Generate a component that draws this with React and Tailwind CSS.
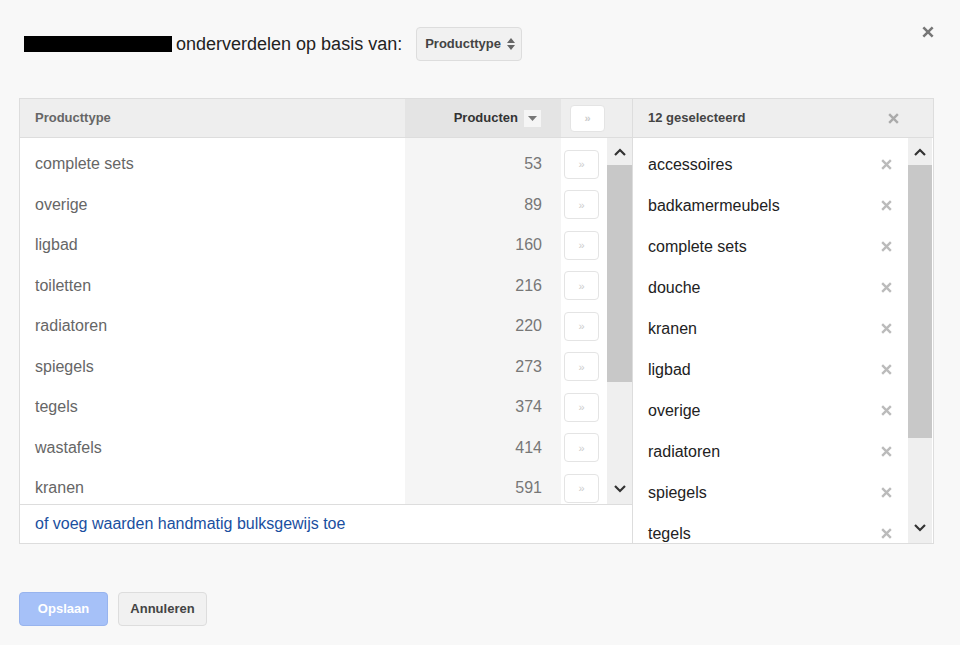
const left = [["complete sets",53],["overige",89],["ligbad",160],["toiletten",216],["radiatoren",220],["spiegels",273],["tegels",374],["wastafels",414],["kranen",591]];
const right = ["accessoires","badkamermeubels","complete sets","douche","kranen","ligbad","overige","radiatoren","spiegels","tegels"];

const Up = () => (<svg width="12" height="8" viewBox="0 0 12 8"><path d="M1 7 L6 2 L11 7" stroke="#333" strokeWidth="2.2" fill="none"/></svg>);
const Down = () => (<svg width="12" height="8" viewBox="0 0 12 8"><path d="M1 1 L6 6 L11 1" stroke="#333" strokeWidth="2.2" fill="none"/></svg>);
const X = ({c="#bbb", s=13}) => (<svg width={s} height={s} viewBox="0 0 12 12"><path d="M2 2 L10 10 M10 2 L2 10" stroke={c} strokeWidth="2.2"/></svg>);
const Btn = ({h="h-[29px]", w="w-[35px]"}) => (<div className={`${w} ${h} bg-white border border-[#e4e4e4] rounded-sm flex items-center justify-center text-[#ccc] text-[11px]`}>»</div>);

export default function App() {
  return (
    <div className="w-[960px] h-[645px] bg-[#f8f8f8] relative overflow-hidden" style={{fontFamily:'"Liberation Sans", Arial, sans-serif'}}>
      <div className="absolute left-[921px] top-[25px]"><X c="#777" s={14}/></div>
      <div className="flex items-center pl-[24px] pt-[27px] h-[61px]">
        <div className="w-[148px] h-[16px] bg-black"/>
        <span className="ml-[4px] text-[18px] text-[#222]">onderverdelen op basis van:</span>
        <div className="ml-[14px] w-[106px] h-[34px] border border-[#ddd] bg-[#f1f1f1] rounded-sm flex items-center pl-[8px] gap-[6px] text-[13px] font-bold text-[#444]">
          Producttype
          <svg width="8" height="14" viewBox="0 0 8 14"><path d="M0 6 L4 1 L8 6Z M0 8 L4 13 L8 8Z" fill="#666"/></svg>
        </div>
      </div>
      <div className="ml-[19px] mt-[37px] w-[915px] h-[446px] border border-[#ddd] flex bg-white">
        <div className="w-[613px] flex flex-col border-r border-[#ddd]">
          <div className="h-[39px] flex bg-[#eeeeee] border-b border-[#ddd] text-[13px] font-bold">
            <div className="w-[385px] flex items-center pl-[15px] text-[#666]">Producttype</div>
            <div className="w-[156px] bg-[#e4e4e4] flex items-center justify-end pr-[20px] gap-[6px] text-[#333]">
              Producten
              <div className="w-[17px] h-[17px] bg-[#f5f5f5] flex items-center justify-center"><svg width="9" height="5"><path d="M0 0 L9 0 L4.5 5Z" fill="#777"/></svg></div>
            </div>
            <div className="flex items-center pl-[9px]"><Btn h="h-[27px]" /></div>
          </div>
          <div className="h-[366px] flex overflow-hidden">
            <div className="w-[385px] flex flex-col pt-[6px] text-[16px] text-[#666]">
              {left.map(([n]) => (<div key={n} className="h-[40.5px] shrink-0 flex items-center pl-[15px]">{n}</div>))}
            </div>
            <div className="w-[156px] bg-[#f5f5f5] flex flex-col pt-[6px] text-[16px] text-[#777]">
              {left.map(([n,c]) => (<div key={n} className="h-[40.5px] shrink-0 flex items-center justify-end pr-[19px]">{c}</div>))}
            </div>
            <div className="w-[46px] flex flex-col pt-[6px]">
              {left.map(([n]) => (<div key={n} className="h-[40.5px] shrink-0 flex items-center pl-[3px]"><Btn/></div>))}
            </div>
            <div className="w-[25px] bg-[#efefef] flex flex-col items-center">
              <div className="h-[27px] flex items-center"><Up/></div>
              <div className="w-[25px] h-[217px] bg-[#c8c8c8]"/>
              <div className="flex-1"/>
              <div className="h-[30px] flex items-center"><Down/></div>
            </div>
          </div>
          <div className="flex-1 border-t border-[#ddd] flex items-center pl-[15px] text-[16px] text-[#1a4fa0]">of voeg waarden handmatig bulksgewijs toe</div>
        </div>
        <div className="flex-1 flex flex-col">
          <div className="h-[39px] flex items-center justify-between bg-[#eeeeee] border-b border-[#ddd] pl-[15px] pr-[33px] text-[13px] font-bold text-[#444]">
            12 geselecteerd <X c="#aaa"/>
          </div>
          <div className="flex-1 flex overflow-hidden">
            <div className="w-[275px] flex flex-col pt-[6px] overflow-hidden">
              {right.map(n => (
                <div key={n} className="h-[41px] shrink-0 flex items-center justify-between pl-[15px] pr-[15px] text-[16px] text-[#222]">{n}<X/></div>
              ))}
            </div>
            <div className="w-[24px] bg-[#efefef] flex flex-col items-center">
              <div className="h-[27px] flex items-center"><Up/></div>
              <div className="w-[24px] h-[273px] bg-[#c8c8c8]"/>
              <div className="flex-1"/>
              <div className="h-[30px] flex items-center"><Down/></div>
            </div>
          </div>
        </div>
      </div>
      <div className="flex gap-[10px] ml-[19px] mt-[48px]">
        <div className="w-[89px] h-[34px] bg-[#a6c1f8] border border-[#98b4ee] rounded-sm flex items-center justify-center text-white text-[13px] font-bold">Opslaan</div>
        <div className="w-[89px] h-[34px] bg-[#f1f1f1] border border-[#ddd] rounded-sm flex items-center justify-center text-[#444] text-[13px] font-bold">Annuleren</div>
      </div>
    </div>
  );
}
